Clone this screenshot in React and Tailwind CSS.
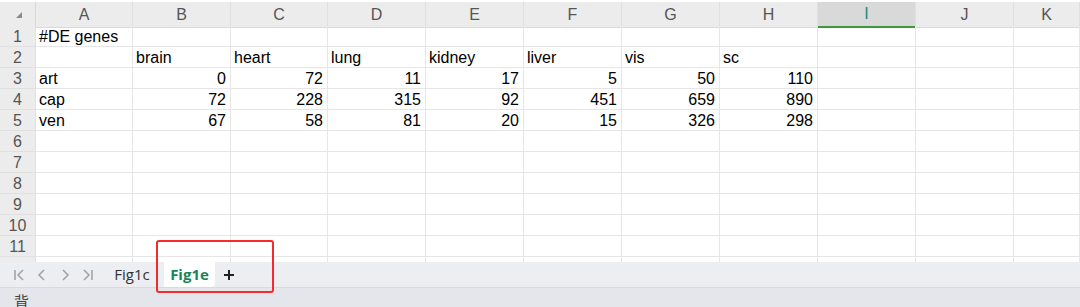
import React from 'react';

const cols = ['A', 'B', 'C', 'D', 'E', 'F', 'G', 'H', 'I', 'J', 'K'];
const gridCols = 'grid grid-cols-[36px_97px_98px_97px_98px_98px_98px_98px_98px_98px_98px_1fr]';

// cell values: strings are left aligned, numbers right aligned
const data = [
  ['#DE genes'],
  ['', 'brain', 'heart', 'lung', 'kidney', 'liver', 'vis', 'sc'],
  ['art', 0, 72, 11, 17, 5, 50, 110],
  ['cap', 72, 228, 315, 92, 451, 659, 890],
  ['ven', 67, 58, 81, 20, 15, 326, 298],
];

const Cell = ({ value }) => {
  const isNum = typeof value === 'number';
  return (
    <div
      className={`h-[21px] border-r border-b border-[#e6e6e6] text-[16px] leading-[21px] text-black whitespace-nowrap overflow-visible ${
        isNum ? 'text-right pr-[4px]' : 'text-left pl-[3px]'
      }`}
    >
      {value === undefined ? '' : String(value)}
    </div>
  );
};

const App = () => {
  const rows = Array.from({ length: 11 }, (_, i) => data[i] || []);

  return (
    <div className="w-[1080px] h-[307px] bg-white overflow-hidden flex flex-col font-['Liberation_Sans',Arial,sans-serif] relative">
      {/* column headers */}
      <div className={`${gridCols} h-[26px] pt-[2px] bg-white`}>
        <div className="bg-[#ececec] border-r border-b border-[#d9d9d9] flex items-center justify-center">
          <svg width="8" height="8" viewBox="0 0 8 8" className="ml-[2px] mt-[1px]">
            <polygon points="7,1 7,7 1,7" fill="#8a8a8a" />
          </svg>
        </div>
        {cols.map((c) => (
          <div
            key={c}
            className={`flex items-center justify-center text-[16px] border-r ${
              c === 'I'
                ? 'bg-[#d9d9d9] text-[#1a8a7a] border-b-2 border-b-[#3b9a3b] border-r-[#e0e0e0]'
                : 'bg-[#ececec] text-[#555] border-b border-[#d9d9d9] border-r-[#e0e0e0]'
            }`}
          >
            {c}
          </div>
        ))}
      </div>

      {/* sheet body */}
      <div className="h-[236px] overflow-hidden flex flex-col">
        {rows.map((r, i) => (
          <div key={i} className={gridCols}>
            <div className="h-[21px] bg-[#ececec] border-r border-b border-[#e0e0e0] text-[16px] leading-[21px] text-[#555] text-center">
              {i + 1}
            </div>
            {cols.map((c, j) => (
              <Cell key={c} value={r[j]} />
            ))}
          </div>
        ))}
        {/* partly hidden next row */}
        <div className={`${gridCols} flex-1`}>
          <div className="bg-[#ececec] border-r border-[#e0e0e0]" />
          {cols.map((c) => (
            <div key={c} className="border-r border-[#e6e6e6]" />
          ))}
        </div>
      </div>

      {/* sheet tabs */}
      <div className="h-[26px] bg-[#eceef2] border-b border-[#d8dae0] flex items-stretch">
        <div className="flex items-center gap-[9px] pl-[12px] text-[#a0a4ac]">
          <svg width="14" height="14" viewBox="0 0 14 14" fill="none" stroke="currentColor" strokeWidth="1.6">
            <path d="M3 2v10M11 2L6 7l5 5" />
          </svg>
          <svg width="14" height="14" viewBox="0 0 14 14" fill="none" stroke="currentColor" strokeWidth="1.6">
            <path d="M9 2L4 7l5 5" />
          </svg>
          <svg width="14" height="14" viewBox="0 0 14 14" fill="none" stroke="currentColor" strokeWidth="1.6">
            <path d="M5 2l5 5-5 5" />
          </svg>
          <svg width="14" height="14" viewBox="0 0 14 14" fill="none" stroke="currentColor" strokeWidth="1.6">
            <path d="M11 2v10M3 2l5 5-5 5" />
          </svg>
        </div>
        <div className="ml-[10px] w-[54px] flex items-center justify-center text-[15px] text-[#333] font-['Open_Sans',sans-serif]">
          Fig1c
        </div>
        <div className="ml-[5px] w-[51px] bg-white rounded-br-[4px] flex items-center justify-center text-[15px] font-bold text-[#17855a] font-['Open_Sans',sans-serif]">
          Fig1e
        </div>
        <div className="w-[28px] flex items-center justify-center text-[#222]">
          <svg width="12" height="12" viewBox="0 0 12 12" stroke="currentColor" strokeWidth="2">
            <path d="M6 1v10M1 6h10" />
          </svg>
        </div>
      </div>

      {/* status bar */}
      <div className="flex-1 bg-[#e4e6eb] overflow-hidden pl-[14px]">
        <span className="block text-[15px] leading-[22px] mt-[2px] text-[#444] font-['Noto_Sans_CJK_SC',sans-serif]">背</span>
      </div>

      {/* red highlight box */}
      <div className="absolute left-[156px] top-[240px] w-[118px] h-[53px] border-2 border-[#f52a2a] rounded-[3px]" />
    </div>
  );
};

export default App;
